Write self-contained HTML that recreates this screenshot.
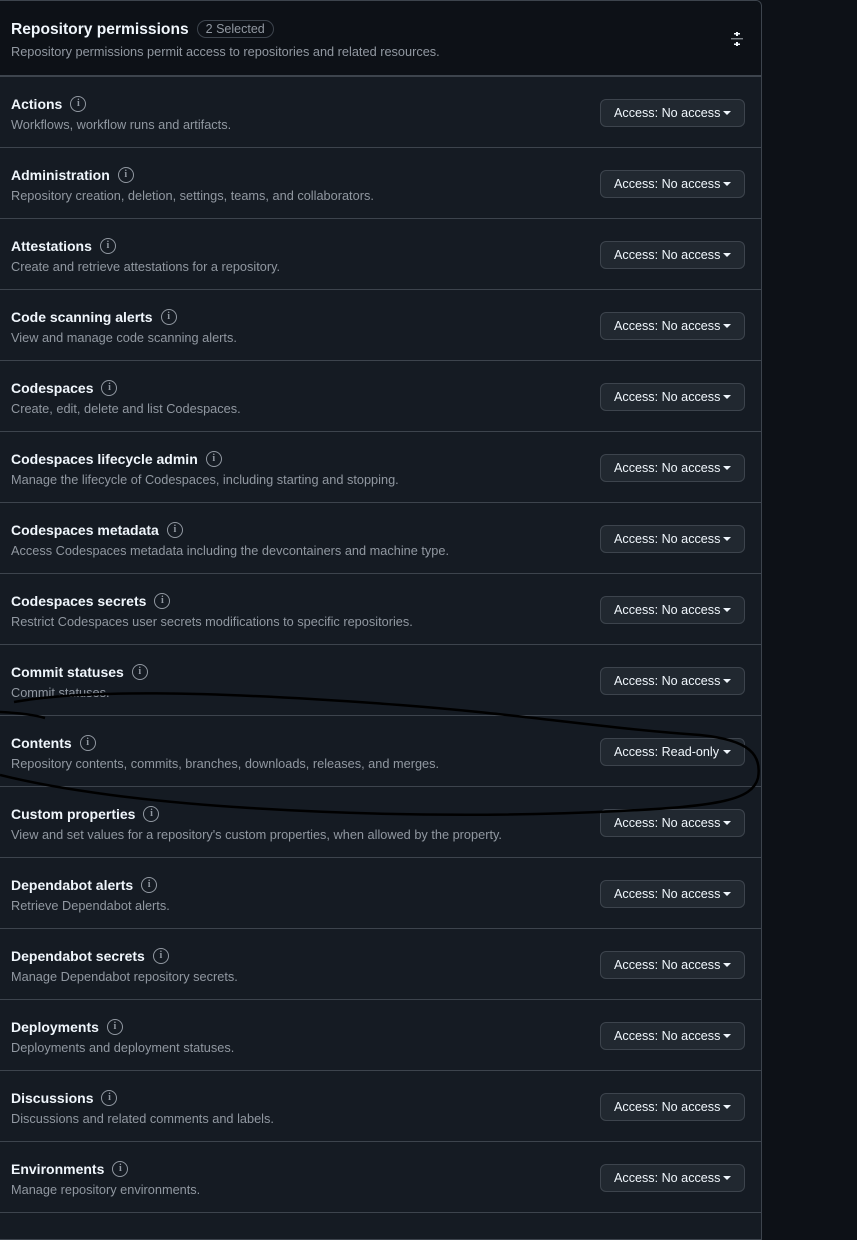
<!DOCTYPE html>
<html><head><meta charset="utf-8"><style>
*{margin:0;padding:0;box-sizing:border-box}
body{width:857px;height:1226px;background:#0d1117;font-family:"Liberation Sans",sans-serif;overflow:hidden;position:relative}
.box{position:absolute;left:0;top:0;width:762px;height:1240px;border:1px solid #3d444d;border-left:none;border-radius:0 6px 0 0;background:#151b23;overflow:hidden}
.hdr{height:76px;background:#0d1117;border-bottom:2px solid #3d444d;position:relative}
.hdr h2{position:absolute;left:11px;top:19px;font-size:15.6px;font-weight:bold;color:#f0f6fc}
.badge{display:inline-block;margin-left:8px;border:1px solid #3d444d;border-radius:10px;padding:1px 8px;font-size:12.5px;font-weight:normal;color:#9198a1;vertical-align:1px}
.hdr p{position:absolute;left:11px;top:43px;font-size:12.75px;color:#9198a1}
.row{height:71px;border-bottom:1px solid #3d444d;position:relative}
.t{position:absolute;left:11px;top:19px;font-size:14px;font-weight:bold;color:#f0f6fc;line-height:17px}
.i{display:inline-block;width:16px;height:16px;border:1.4px solid #9198a1;border-radius:50%;margin-left:8px;vertical-align:top;font:bold 10px "Liberation Serif",serif;color:#9198a1;text-align:center;line-height:14px}
.d{position:absolute;left:11px;top:40px;font-size:12.75px;color:#9198a1}
.b{position:absolute;left:600px;top:22px;width:145px;height:28px;border:1px solid #3d444d;border-radius:6px;background:#212830;color:#f0f6fc;font-size:12.6px;line-height:26px;padding-left:13px}
.b:after{content:"";position:absolute;right:13px;top:11px;border:4px solid transparent;border-top:4px solid #f0f6fc}
</style></head><body>
<div class="box">
<div class="hdr"><h2>Repository permissions<span class="badge">2 Selected</span></h2><p>Repository permissions permit access to repositories and related resources.</p>
<svg style="position:absolute;left:729px;top:30px" width="16" height="16" viewBox="0 0 16 16" fill="#f0f6fc"><rect x="7" y="1" width="2" height="4"/><rect x="5" y="2" width="6" height="1.5"/><rect x="7" y="11" width="2" height="4"/><rect x="5" y="12.5" width="6" height="1.5"/><rect x="2" y="7.3" width="12" height="1" opacity=".7"/></svg></div>
<div class="row"><div class="t">Actions<span class="i">i</span></div><div class="d">Workflows, workflow runs and artifacts.</div><div class="b">Access: No access</div></div>
<div class="row"><div class="t">Administration<span class="i">i</span></div><div class="d">Repository creation, deletion, settings, teams, and collaborators.</div><div class="b">Access: No access</div></div>
<div class="row"><div class="t">Attestations<span class="i">i</span></div><div class="d">Create and retrieve attestations for a repository.</div><div class="b">Access: No access</div></div>
<div class="row"><div class="t">Code scanning alerts<span class="i">i</span></div><div class="d">View and manage code scanning alerts.</div><div class="b">Access: No access</div></div>
<div class="row"><div class="t">Codespaces<span class="i">i</span></div><div class="d">Create, edit, delete and list Codespaces.</div><div class="b">Access: No access</div></div>
<div class="row"><div class="t">Codespaces lifecycle admin<span class="i">i</span></div><div class="d">Manage the lifecycle of Codespaces, including starting and stopping.</div><div class="b">Access: No access</div></div>
<div class="row"><div class="t">Codespaces metadata<span class="i">i</span></div><div class="d">Access Codespaces metadata including the devcontainers and machine type.</div><div class="b">Access: No access</div></div>
<div class="row"><div class="t">Codespaces secrets<span class="i">i</span></div><div class="d">Restrict Codespaces user secrets modifications to specific repositories.</div><div class="b">Access: No access</div></div>
<div class="row"><div class="t">Commit statuses<span class="i">i</span></div><div class="d">Commit statuses.</div><div class="b">Access: No access</div></div>
<div class="row"><div class="t">Contents<span class="i">i</span></div><div class="d">Repository contents, commits, branches, downloads, releases, and merges.</div><div class="b">Access: Read-only</div></div>
<div class="row"><div class="t">Custom properties<span class="i">i</span></div><div class="d">View and set values for a repository's custom properties, when allowed by the property.</div><div class="b">Access: No access</div></div>
<div class="row"><div class="t">Dependabot alerts<span class="i">i</span></div><div class="d">Retrieve Dependabot alerts.</div><div class="b">Access: No access</div></div>
<div class="row"><div class="t">Dependabot secrets<span class="i">i</span></div><div class="d">Manage Dependabot repository secrets.</div><div class="b">Access: No access</div></div>
<div class="row"><div class="t">Deployments<span class="i">i</span></div><div class="d">Deployments and deployment statuses.</div><div class="b">Access: No access</div></div>
<div class="row"><div class="t">Discussions<span class="i">i</span></div><div class="d">Discussions and related comments and labels.</div><div class="b">Access: No access</div></div>
<div class="row"><div class="t">Environments<span class="i">i</span></div><div class="d">Manage repository environments.</div><div class="b">Access: No access</div></div>
</div>
<svg style="position:absolute;left:0;top:0" width="857" height="1226"><path d="M14 702 C80 690 200 690 400 705 C520 714 600 728 700 735 C750 740 762 755 758 778 C752 800 720 806 620 811 C500 817 380 816 250 808 C150 802 60 790 0 775" fill="none" stroke="#000" stroke-width="2.5"/><path d="M0 712 C20 713 35 715 45 718" fill="none" stroke="#000" stroke-width="2.5"/></svg>
</body></html>
